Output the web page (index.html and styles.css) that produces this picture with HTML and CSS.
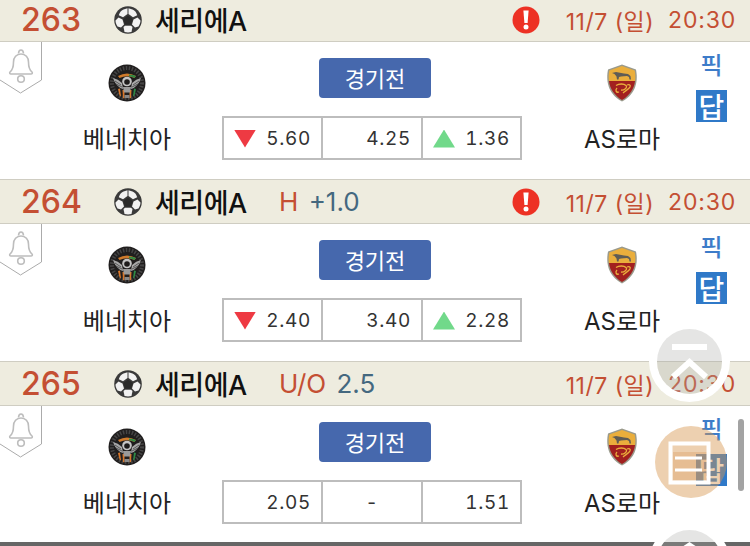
FILE: index.html
```html
<!DOCTYPE html>
<html lang="ko">
<head>
<meta charset="utf-8">
<title>경기 목록</title>
<link rel="stylesheet" href="styles.css">
</head>
<body>
<svg class="defs" width="0" height="0" aria-hidden="true">
  <defs>
    <symbol id="ball" viewBox="0 0 28 28">
      <circle cx="14" cy="14" r="13.800" fill="#3a3a3a"/>
      <path d="M14 9.500l4.800 3.500-1.800 5.700h-6L9.200 13z" fill="#2a2a2a"/>
      <path d="M9.500 3.500 13.500 2.200 13.500 8 9 11.300 4.800 9.300C5.500 6.500 7 4.800 9.500 3.500z" fill="#f2f2f2"/>
      <path d="M18.500 3.500 14.500 2.200 14.500 8 19 11.300 23.200 9.300C22.500 6.500 21 4.800 18.500 3.500z" fill="#f2f2f2"/>
      <path d="M1.500 14.500 4.500 11.500 8.500 13.500 10 18.500 7 21.500 3.500 20.500C2.300 18.500 1.500 16.500 1.500 14.500z" fill="#f2f2f2"/>
      <path d="M26.500 14.500 23.500 11.500 19.500 13.500 18 18.500 21 21.500 24.500 20.500C25.700 18.500 26.500 16.500 26.500 14.500z" fill="#f2f2f2"/>
      <path d="M9.500 21 11 19.700h6L18.500 21 17.500 26A13 13 0 0 1 10.500 26z" fill="#f2f2f2"/>
    </symbol>
    <symbol id="alert" viewBox="0 0 28 28">
      <circle cx="14" cy="14" r="13.500" fill="#ed3124"/>
      <path d="M11.400 4.500h5.200l-1 12.500h-3.200z" fill="#fff"/>
      <circle cx="14" cy="21" r="2.500" fill="#fff"/>
    </symbol>
    <symbol id="tag" viewBox="0 0 42 53">
      <path d="M0 38 20.500 51 41.500 38V0" fill="#fff" stroke="#ababab" stroke-width="1"/>
      <path d="M10 30c2.500-2 3.500-4.500 3.500-10 0-4.500 3-8 7.500-8s7.500 3.500 7.500 8c0 5.500 1 8 3.500 10 .7.800.2 2-1 2H11c-1.200 0-1.700-1.200-1-2z" fill="none" stroke="#bdbdbd" stroke-width="1.600"/>
      <path d="M18.500 11.500q.2-3.500 2.500-3.500t2.500 3.500" fill="none" stroke="#bdbdbd" stroke-width="1.600"/>
      <circle cx="21" cy="37" r="3.300" fill="none" stroke="#bdbdbd" stroke-width="1.600"/>
    </symbol>
    <symbol id="venezia" viewBox="0 0 38 38">
      <circle cx="19" cy="19" r="18.500" fill="#201e1e"/>
      <circle cx="19" cy="19" r="15" fill="none" stroke="#555" stroke-width="4" stroke-dasharray="1.500 1.500" opacity=".7"/>
      <path d="M10 12q9-5 18 0l-1.500 2q-7.500-3.500-15 0z" fill="#cf7a2b"/>
      <path d="M21 10.400q4 .3 7 1.600l-1.500 2q-3-1.500-5.500-1.700z" fill="#2e8a45"/>
      <path d="M10 25 11.500 31.500 13 32.500 12 24.500zM14.500 26 15 34 16.500 34.500V26z" fill="#d9772b"/>
      <path d="M28 25 26.500 31.500 25 32.500 26 24.500z" fill="#2e8a45"/>
      <path d="M21.500 26 21.500 34.500 23 34 23.500 26z" fill="#d9772b"/>
      <path d="M5 14q5 1 9 5l1 6q-7-2-10-11zM33 14q-5 1-9 5l-1 6q7-2 10-11z" fill="#a8a8a8"/>
      <path d="M7 17l6 4M8 20l6 3M31 17l-6 4M30 20l-6 3" stroke="#333" stroke-width=".7"/>
      <circle cx="19" cy="17.500" r="4.800" fill="#c4c4c4"/>
      <circle cx="19" cy="18" r="2.800" fill="#1d1b1b"/>
      <path d="M15 23h8l-1 5.500h-6z" fill="#9a9a9a"/>
      <path d="M16.500 31h5v3h-5z" fill="#888"/>
    </symbol>
    <symbol id="roma" viewBox="0 0 32 38">
      <path d="M16 .5 30 5.500c2 10 1 24-14 32C1 29.500 0 15.500 2 5.500z" fill="#9a9a8c"/>
      <path d="M16 2 28.700 6.600c.6 3.200.9 7 .4 10.400H2.900c-.5-3.400-.2-7.200.4-10.400z" fill="#eaae3c"/>
      <path d="M2.900 17h26.200c-1.100 7.300-5 14.300-13.100 19C7.900 31.300 4 24.300 2.900 17z" fill="#a2201f"/>
      <path d="M6 9l4-1 8 1.500 4 .5 2.500 2 .5 3.500h-1.500l-.5-2.500-2-1-6 .5-2 .5-.5 2.500H11l-.5-3-2-2.500z" fill="#5f5c55"/>
      <path d="M10 21.500c3-2 8-2 10 0s-2 5-5 4.500M21 21c2-1 4 0 3 2s-5 4-7 6M11 24c-2 2-1 5 2 4" fill="none" stroke="#eaae3c" stroke-width="1.300"/>
    </symbol>
  </defs>
</svg>

<main class="list">

  <section class="match">
    <header class="head">
      <span class="num">263</span>
      <svg class="ball"><use href="#ball"/></svg>
      <span class="league">세리에A</span>
      <span class="line"></span>
      <svg class="alert"><use href="#alert"/></svg>
      <time class="date">11/7 (일)</time>
      <time class="clock">20:30</time>
    </header>
    <div class="body">
      <svg class="tag"><use href="#tag"/></svg>
      <div class="team">
        <svg class="logo"><use href="#venezia"/></svg>
        <span class="name">베네치아</span>
      </div>
      <div class="center">
        <a class="btn">경기전</a>
        <div class="odds">
          <div class="cell"><i class="tri down"></i><span>5.60</span></div>
          <div class="cell"><span>4.25</span></div>
          <div class="cell"><i class="tri up"></i><span>1.36</span></div>
        </div>
      </div>
      <div class="team">
        <svg class="logo roma"><use href="#roma"/></svg>
        <span class="name">AS로마</span>
      </div>
      <div class="pick"><span class="pick-q">픽</span><span class="pick-a">답</span></div>
    </div>
  </section>

  <section class="match">
    <header class="head">
      <span class="num">264</span>
      <svg class="ball"><use href="#ball"/></svg>
      <span class="league">세리에A</span>
      <span class="line"><b>H</b> <em>+1.0</em></span>
      <svg class="alert"><use href="#alert"/></svg>
      <time class="date">11/7 (일)</time>
      <time class="clock">20:30</time>
    </header>
    <div class="body">
      <svg class="tag"><use href="#tag"/></svg>
      <div class="team">
        <svg class="logo"><use href="#venezia"/></svg>
        <span class="name">베네치아</span>
      </div>
      <div class="center">
        <a class="btn">경기전</a>
        <div class="odds">
          <div class="cell"><i class="tri down"></i><span>2.40</span></div>
          <div class="cell"><span>3.40</span></div>
          <div class="cell"><i class="tri up"></i><span>2.28</span></div>
        </div>
      </div>
      <div class="team">
        <svg class="logo roma"><use href="#roma"/></svg>
        <span class="name">AS로마</span>
      </div>
      <div class="pick"><span class="pick-q">픽</span><span class="pick-a">답</span></div>
    </div>
  </section>

  <section class="match">
    <header class="head">
      <span class="num">265</span>
      <svg class="ball"><use href="#ball"/></svg>
      <span class="league">세리에A</span>
      <span class="line"><b>U/O</b> <em>2.5</em></span>
      <time class="date">11/7 (일)</time>
      <time class="clock">20:30</time>
    </header>
    <div class="body">
      <svg class="tag"><use href="#tag"/></svg>
      <div class="team">
        <svg class="logo"><use href="#venezia"/></svg>
        <span class="name">베네치아</span>
      </div>
      <div class="center">
        <a class="btn">경기전</a>
        <div class="odds">
          <div class="cell"><span>2.05</span></div>
          <div class="cell mid"><span>-</span></div>
          <div class="cell"><span>1.51</span></div>
        </div>
      </div>
      <div class="team">
        <svg class="logo roma"><use href="#roma"/></svg>
        <span class="name">AS로마</span>
      </div>
      <div class="pick"><span class="pick-q">픽</span><span class="pick-a">답</span></div>
    </div>
  </section>

</main>

<div class="bottom-bar"></div>

<div class="fab fab-top">
  <svg width="65" height="65" viewBox="0 0 65 65"><path d="M15 18h35" stroke="#fff" stroke-width="6"/><path d="M16 48 32.500 33 49 48" fill="none" stroke="#fff" stroke-width="6"/></svg>
</div>
<div class="fab-menu">
  <svg width="72" height="72" viewBox="0 0 72 72"><rect x="18" y="26" width="36" height="28" fill="#d99a5e" fill-opacity=".35"/><rect x="15.500" y="17.500" width="38" height="39" fill="none" stroke="#fff" stroke-width="4"/><path d="M20 32h27M20 44h27" stroke="#fff" stroke-width="3"/></svg>
</div>
<div class="fab fab-third">
  <svg width="65" height="65" viewBox="0 0 65 65"><path d="M22 22 32.500 15 43 22" fill="none" stroke="#fff" stroke-width="5"/></svg>
</div>
<div class="scrollbar"></div>
</body>
</html>
```

FILE: styles.css
```css
* { box-sizing: border-box; }
html, body { margin: 0; height: 546px; overflow: hidden; background: #fff; }
body { position: relative; font-family: Inter, "Noto Sans CJK KR", sans-serif; color: #222; }
.defs { position: absolute; }
.list { margin-top: -3px; }

.head {
  height: 45px;
  display: flex;
  align-items: center;
  padding: 0 14px 0 21px;
  background: #eeecdf;
  border-top: 1px solid #cfcdc2;
  border-bottom: 1px solid #cfcdc2;
}
.num { width: 93px; font-size: 32px; font-weight: 500; color: #c44f33; }
.ball { width: 28px; height: 28px; margin-right: 13px; }
.league { width: 124px; font-size: 27px; font-weight: 500; color: #111; letter-spacing: -.5px; white-space: nowrap; }
.line { flex: 1; font-size: 26px; color: #c44f33; white-space: nowrap; }
.line b { font-weight: 400; margin-right: 3px; }
.line em { font-style: normal; color: #44687f; }
.alert { width: 28px; height: 28px; margin-right: 26px; }
.date { font-size: 23px; color: #c44f33; letter-spacing: .5px; margin-right: 14px; }
.clock { font-size: 23px; color: #c44f33; letter-spacing: .8px; }

.body {
  position: relative;
  height: 137px;
  display: grid;
  grid-template-columns: 190px 300px 200px;
  margin-left: 32px;
  padding-top: 16px;
}
.tag { position: absolute; left: -32px; top: 0; width: 42px; height: 53px; }
.team { display: flex; flex-direction: column; align-items: center; padding-top: 6px; }
.logo { width: 38px; height: 38px; }
.logo.roma { width: 32px; }
.name { margin-top: 22px; font-size: 24px; line-height: 32px; color: #222; }
.center { display: flex; flex-direction: column; align-items: center; }
.btn {
  width: 112px;
  height: 40px;
  margin-left: 6px;
  padding-bottom: 2px;
  display: flex;
  align-items: center;
  justify-content: center;
  border-radius: 4px;
  background: #4668ad;
  color: #fff;
  font-size: 22px;
}
.odds {
  width: 300px;
  height: 44px;
  margin-top: 18px;
  display: grid;
  grid-template-columns: 97px 100px 99px;
  border: 2px solid #bdbdbd;
}
.cell {
  display: flex;
  align-items: center;
  justify-content: space-between;
  padding: 1px 10px 0;
  font-size: 19px;
  font-variant-numeric: tabular-nums;
  letter-spacing: .7px;
  color: #333;
  border-left: 2px solid #bdbdbd;
}
.cell:first-child { border-left: 0; }
.cell span:only-child { margin-left: auto; }
.cell.mid span:only-child { margin: 0 auto; }
.tri { width: 22px; height: 18px; }
.tri.down { background: #ee3a43; clip-path: polygon(0 0, 100% 0, 50% 100%); }
.tri.up { background: #71d98a; clip-path: polygon(50% 0, 100% 100%, 0 100%); }

.pick { position: absolute; right: 23px; top: 10px; display: flex; flex-direction: column; align-items: center; }
.pick-q { font-size: 24px; line-height: 28px; font-weight: 500; color: #3d7cc9; }
.pick-a {
  width: 31px;
  height: 32px;
  margin-top: 10px;
  display: flex;
  align-items: center;
  justify-content: center;
  background: #2f79c8;
  color: #fff;
  font-size: 28px;
  font-weight: 500;
}

.bottom-bar { position: absolute; left: 0; right: 0; bottom: 0; height: 4px; background: #666; }
.fab {
  position: absolute;
  left: 657px;
  width: 65px;
  height: 65px;
  border-radius: 50%;
  background: rgba(170, 170, 165, .3);
  box-shadow: 0 0 0 8px #fff;
}
.fab-top { top: 329px; }
.fab-third { top: 530px; }
.fab-menu {
  position: absolute;
  left: 655px;
  top: 426px;
  width: 72px;
  height: 72px;
  border-radius: 50%;
  background: rgba(215, 150, 80, .45);
}
.scrollbar { position: absolute; left: 738px; top: 419px; width: 6px; height: 72px; border-radius: 3px; background: #a3a3a3; }
```
